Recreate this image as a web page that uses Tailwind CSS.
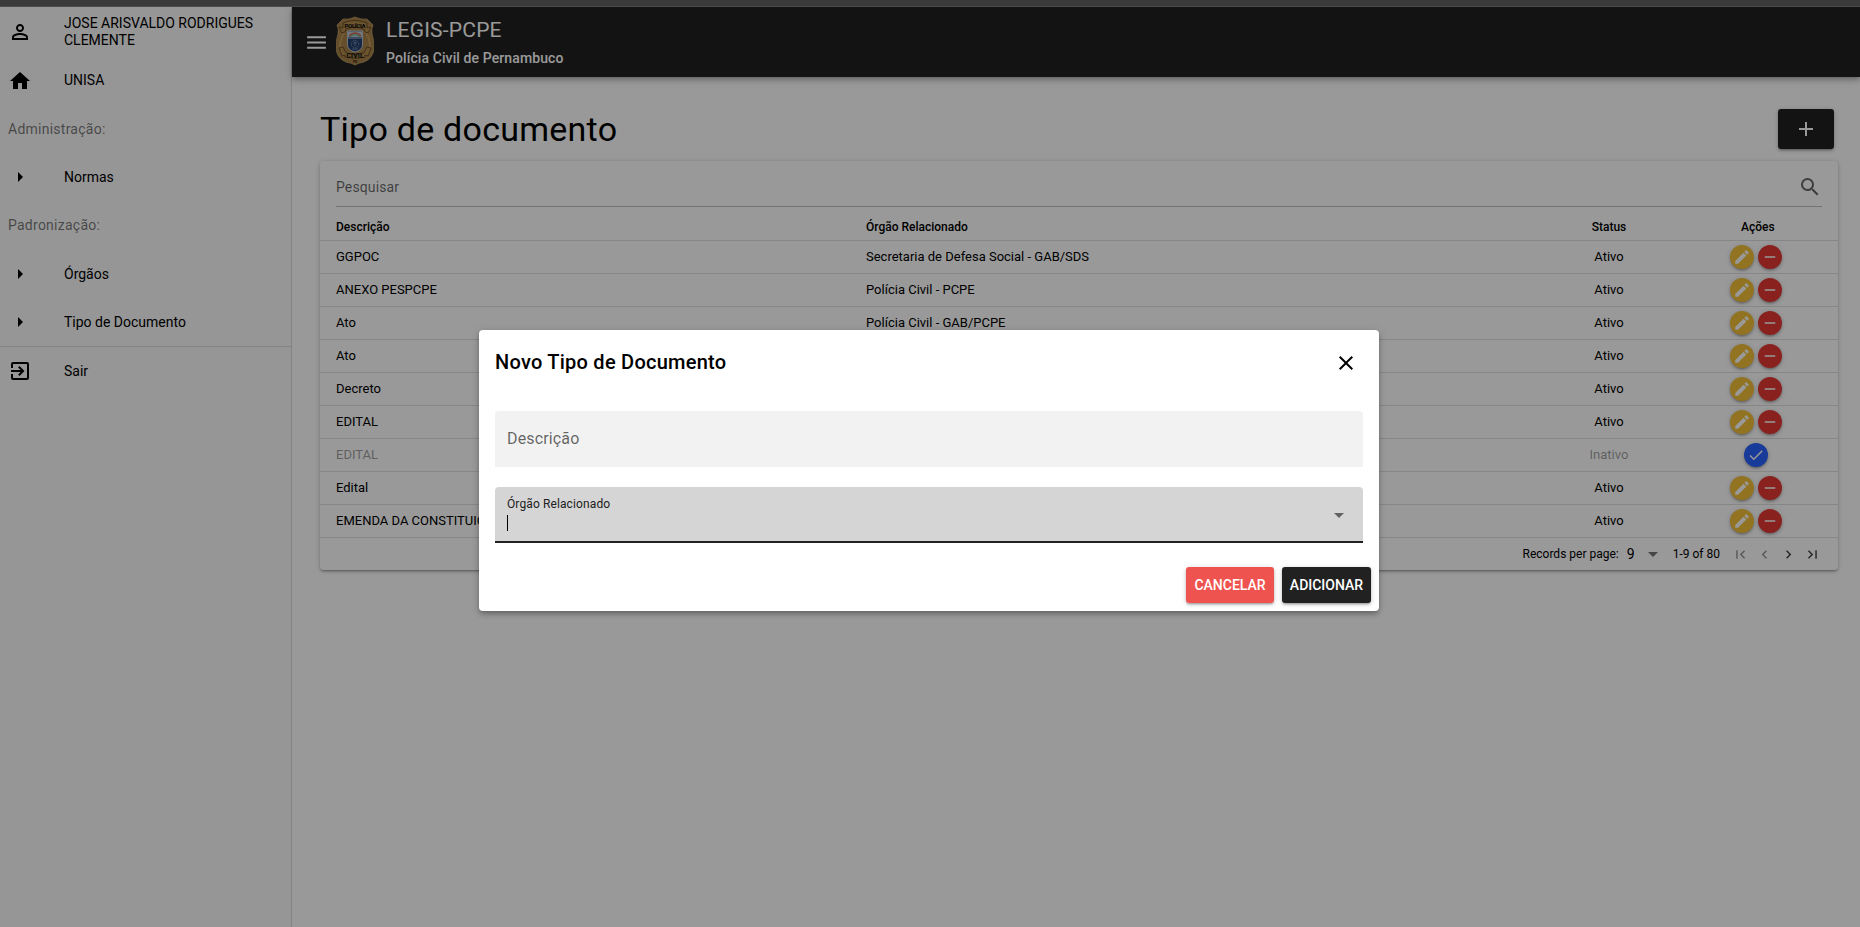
<!DOCTYPE html>
<html lang="pt-BR">
<head>
<meta charset="utf-8">
<title>LEGIS-PCPE</title>
<script src="https://cdn.jsdelivr.net/npm/@tailwindcss/browser@4"></script>
</head>
<body class="relative h-[927px] w-[1860px] overflow-hidden bg-white font-['Roboto',sans-serif] text-sm text-black">
<svg class="hidden">
  <symbol id="edit" viewBox="0 0 24 24"><path d="M3 17.25V21h3.75L17.81 9.94l-3.75-3.75L3 17.25zM20.71 7.04a1 1 0 0 0 0-1.41l-2.34-2.34a1 1 0 0 0-1.41 0l-1.83 1.83 3.75 3.75 1.83-1.83z"/></symbol>
  <symbol id="minus" viewBox="0 0 24 24"><path d="M19 13H5v-2h14v2z"/></symbol>
  <symbol id="check" viewBox="0 0 24 24"><path d="M9 16.17 4.83 12l-1.42 1.41L9 19 21 7l-1.41-1.41z"/></symbol>
  <symbol id="right" viewBox="0 0 24 24"><path d="M10 17l5-5-5-5v10z"/></symbol>
  <symbol id="down" viewBox="0 0 24 24"><path d="M7 10l5 5 5-5z"/></symbol>
</svg>

<div class="flex h-full flex-col">
  <div class="h-[7px] shrink-0"></div>
  <div class="flex min-h-0 flex-1">
    <aside class="w-[292px] shrink-0 border-r border-black/12 bg-[#fafafa]">
      <div class="flex h-[49px] items-center px-2">
        <svg class="mt-px mr-8 size-6 shrink-0" viewBox="0 0 24 24"><path d="M12 5.9a2.1 2.1 0 1 1 0 4.2 2.1 2.1 0 0 1 0-4.2m0 9c2.97 0 6.1 1.46 6.1 2.1v1.1H5.9V17c0-.64 3.13-2.1 6.1-2.1M12 4C9.79 4 8 5.79 8 8s1.79 4 4 4 4-1.79 4-4-1.79-4-4-4zm0 9c-2.67 0-8 1.34-8 4v3h16v-3c0-2.66-5.33-4-8-4z"/></svg>
        <span class="leading-[16.8px]">JOSE ARISVALDO RODRIGUES CLEMENTE</span>
      </div>
      <div class="flex h-12 items-center px-2">
        <svg class="mt-px mr-8 size-6 shrink-0" viewBox="0 0 24 24"><path d="M10 20v-6h4v6h5v-8h3L12 3 2 12h3v8z"/></svg>UNISA
      </div>
      <div class="flex h-[49px] items-center px-2 tracking-[.01786em] text-black/54">Administração:</div>
      <div class="flex h-12 items-center px-2"><svg class="mr-8 size-6"><use href="#right"/></svg>Normas</div>
      <div class="flex h-[49px] items-center px-2 pb-px tracking-[.01786em] text-black/54">Padronização:</div>
      <div class="flex h-12 items-center px-2"><svg class="mr-8 size-6"><use href="#right"/></svg>Órgãos</div>
      <div class="flex h-[49px] items-center border-b border-black/12 px-2"><svg class="mr-8 size-6"><use href="#right"/></svg>Tipo de Documento</div>
      <div class="flex h-12 items-center px-2">
        <svg class="mr-8 size-6" viewBox="0 0 24 24"><path d="M10.09 15.59 11.5 17l5-5-5-5-1.41 1.41L12.67 11H3v2h9.67l-2.58 2.59zM19 3H5a2 2 0 0 0-2 2v4h2V5h14v14H5v-4H3v4a2 2 0 0 0 2 2h14a2 2 0 0 0 2-2V5a2 2 0 0 0-2-2z"/></svg>Sair
      </div>
    </aside>

    <div class="flex min-w-0 flex-1 flex-col">
      <header class="flex h-[70px] shrink-0 items-center bg-[#212121] pl-3 text-white shadow-[0_2px_4px_-1px_rgba(0,0,0,.2),0_4px_5px_rgba(0,0,0,.14),0_1px_10px_rgba(0,0,0,.12)]">
        <svg class="size-[25px]" viewBox="0 0 24 24" fill="currentColor"><path d="M3 18h18v-2H3v2zm0-5h18v-2H3v2zm0-7v2h18V6H3z"/></svg>
        <svg class="-mt-0.5 ml-[7px] h-[50px] w-[38px]" viewBox="0 0 38 50">
          <path d="M7 3Q13 4 19 1q6 3 12 2l6 6q-2 4-1 9 2 6 2 13 0 11-10 15-6 1-9 3-3-2-9-3Q0 42 0 31q0-7 2-13 1-5-1-9z" fill="#a78248" stroke="#c9a767" stroke-width=".7"/>
          <path d="M9 15q-5 8-5 16M29 15q5 8 5 16" fill="none" stroke="#c09a5a" stroke-width="2"/>
          <path d="M3 11l4 1V7q12-5 24 0v5l4-1-3 6-3-1-1-3q-9-4-18 0l-1 3-3 1zM3 32l4-1 3 6q9 3 18 0l3-6 4 1-3 8-3-1v2q-10 3-20 0v-2l-3 1z" fill="#b48d4e" stroke="#4d3819" stroke-width=".7"/>
          <path d="M11.500 15h15v14q0 5-7.500 7-7.500-2-7.500-7z" fill="#23406f" stroke="#c5ccd6" stroke-width=".9"/>
          <path d="M12 15.500h14V21H12z" fill="#b9c8d4"/>
          <path d="M13 20q6-6 12 0" fill="none" stroke="#d06050" stroke-width="1.300"/>
          <path d="M14 20.500q5-3.500 10 0" fill="none" stroke="#62b588" stroke-width="1.200"/>
          <path d="M12 22h14" stroke="#dce2ea" stroke-width=".8"/>
          <circle cx="19" cy="28" r="3.800" fill="none" stroke="#8296b5" stroke-width=".8" stroke-dasharray="1.500 .7"/>
          <path d="M17 27h4m-2-2v5m-3 3h6" stroke="#8296b5" stroke-width=".8"/>
          <text x="19" y="11.500" text-anchor="middle" font-size="6" font-weight="900" textLength="21" fill="#111">POLÍCIA</text>
          <text x="19" y="41.500" text-anchor="middle" font-size="6.500" font-weight="900" textLength="17" fill="#111">CIVIL</text>
          <text x="19" y="46.500" text-anchor="middle" font-size="3.500" font-weight="700" fill="#302010">PE</text>
        </svg>
        <div class="ml-3 flex flex-col">
          <div class="text-[21px] leading-8 tracking-[.01em]">LEGIS-PCPE</div>
          <div class="leading-6 font-medium tracking-[.00714em]">Polícia Civil de Pernambuco</div>
        </div>
      </header>

      <main class="flex flex-1 flex-col pt-8 pr-[22px] pl-7">
        <div class="flex h-10 items-center justify-between pr-1">
          <h1 class="text-[34px] leading-10 tracking-[.00735em]">Tipo de documento</h1>
          <button class="flex h-10 w-14 items-center justify-center rounded-[3px] bg-[#212121] text-white shadow-[0_1px_5px_rgba(0,0,0,.2),0_2px_2px_rgba(0,0,0,.14),0_3px_1px_-2px_rgba(0,0,0,.12)]">
            <svg class="size-6" viewBox="0 0 24 24" fill="currentColor"><path d="M19 13h-6v6h-2v-6H5v-2h6V5h2v6h6v2z"/></svg>
          </button>
        </div>
        <section class="mt-3 h-[409px] rounded bg-white shadow-[0_1px_5px_rgba(0,0,0,.2),0_2px_2px_rgba(0,0,0,.14),0_3px_1px_-2px_rgba(0,0,0,.12)]">
          <div class="mx-4 flex h-[46px] items-center justify-between border-b border-black/24 pt-[7px] text-black/60">
            <span class="tracking-[.00937em]">Pesquisar</span>
            <svg class="size-6" viewBox="0 0 24 24" fill="currentColor"><path d="M15.500 14h-.79l-.28-.27A6.470 6.470 0 0 0 16 9.500 6.500 6.500 0 1 0 9.500 16c1.610 0 3.090-.59 4.230-1.570l.27.28v.79l5 4.990L20.490 19l-4.990-5zm-6 0a4.500 4.500 0 1 1 0-9 4.500 4.500 0 0 1 0 9z"/></svg>
          </div>
          <div class="grid h-[34px] grid-cols-[546px_665px_156px_1fr] items-center border-b border-black/12 pt-[7px] text-xs font-medium">
            <span class="pl-4">Descrição</span><span>Órgão Relacionado</span><span class="text-center">Status</span><span class="pl-[54px]">Ações</span>
          </div>
          <div id="rows"></div>
          <div class="flex h-[32px] items-center justify-end pr-[17px] text-xs">
            <span>Records per page:</span>
            <span class="ml-2 w-[14px] text-sm">9</span>
            <svg class="size-6 text-black/54" fill="currentColor"><use href="#down"/></svg>
            <span class="mr-[12px] ml-2">1-9 of 80</span>
            <div class="flex gap-[7px] text-black/60">
              <svg class="size-[17px] opacity-70" viewBox="0 0 24 24" fill="currentColor"><path d="M18.410 16.590 13.820 12l4.590-4.590L17 6l-6 6 6 6zM6 6h2v12H6z"/></svg>
              <svg class="size-[17px] opacity-70" viewBox="0 0 24 24" fill="currentColor"><path d="M15.410 7.410 14 6l-6 6 6 6 1.410-1.410L10.830 12z"/></svg>
              <svg class="size-[17px] text-black/75" viewBox="0 0 24 24" fill="currentColor"><path d="M10 6 8.590 7.410 13.170 12l-4.580 4.590L10 18l6-6z"/></svg>
              <svg class="size-[17px] text-black/75" viewBox="0 0 24 24" fill="currentColor"><path d="M5.590 7.410 10.180 12l-4.590 4.590L7 18l6-6-6-6zM16 6h2v12h-2z"/></svg>
            </div>
          </div>
        </section>
      </main>
    </div>
  </div>
</div>

<div class="absolute inset-0 bg-black/40"></div>
<div class="absolute inset-x-0 top-0 h-[7px] border-b border-[#4b4b4b] bg-[#3a3a3a]"></div>

<div class="absolute top-[330px] left-[479px] flex h-[281px] w-[900px] flex-col rounded bg-white shadow-[0_2px_4px_-1px_rgba(0,0,0,.2),0_4px_5px_rgba(0,0,0,.14),0_1px_10px_rgba(0,0,0,.12)]">
  <div class="flex h-[64px] items-center justify-between pr-[21px] pl-4">
    <h2 class="text-xl leading-8 font-medium tracking-[.0125em]">Novo Tipo de Documento</h2>
    <svg class="mt-0.5 size-6" viewBox="0 0 24 24"><path d="M19 6.410 17.590 5 12 10.590 6.410 5 5 6.410 10.590 12 5 17.590 6.410 19 12 13.410 17.590 19 19 17.590 13.410 12z"/></svg>
  </div>
  <div class="mx-4 mt-[17px] flex h-14 items-center rounded-t bg-[#f2f2f2] px-3 text-base tracking-[.00937em] text-black/60">Descrição</div>
  <div class="mx-4 mt-5 flex h-14 items-center justify-between rounded-t border-b-2 border-[#212121] bg-[#d5d5d5] pr-3 pl-3">
    <div class="-mt-[3px] flex flex-col">
      <span class="text-xs leading-5 tracking-[.00937em] text-[#212121]">Órgão Relacionado</span>
      <span class="mt-px h-4 w-px bg-black"></span>
    </div>
    <svg class="mt-0.5 size-6 text-black/54" fill="currentColor"><use href="#down"/></svg>
  </div>
  <div class="mt-6 flex justify-end gap-2 pr-2 font-medium text-white">
    <button class="h-9 w-[88px] rounded-[3px] bg-[#ef5350] shadow-[0_1px_5px_rgba(0,0,0,.2),0_2px_2px_rgba(0,0,0,.14),0_3px_1px_-2px_rgba(0,0,0,.12)]">CANCELAR</button>
    <button class="h-9 w-[89px] rounded-[3px] bg-[#212121] shadow-[0_1px_5px_rgba(0,0,0,.2),0_2px_2px_rgba(0,0,0,.14),0_3px_1px_-2px_rgba(0,0,0,.12)]">ADICIONAR</button>
  </div>
</div>

<script>
const rows = [
  ['GGPOC', 'Secretaria de Defesa Social - GAB/SDS', 1],
  ['ANEXO PESPCPE', 'Polícia Civil - PCPE', 1],
  ['Ato', 'Polícia Civil - GAB/PCPE', 1],
  ['Ato', '', 1],
  ['Decreto', '', 1],
  ['EDITAL', '', 1],
  ['EDITAL', '', 0],
  ['Edital', '', 1],
  ['EMENDA DA CONSTITUIÇÃO', '', 1],
];
const shadow = 'shadow-[0_1px_5px_rgba(0,0,0,.2),0_2px_2px_rgba(0,0,0,.14),0_3px_1px_-2px_rgba(0,0,0,.12)]';
const round = (bg, icon) => `<span class="flex size-6 items-center justify-center rounded-full text-white ${bg} ${shadow}"><svg class="mb-px size-[18px]" fill="currentColor"><use href="#${icon}"/></svg></span>`;
document.getElementById('rows').innerHTML = rows.map(([name, org, on]) => `
  <div class="grid h-[33px] grid-cols-[546px_665px_156px_1fr] items-center border-b border-black/12 text-[13px] ${on ? '' : 'text-black/40'}">
    <span class="pl-4">${name}</span><span>${org}</span><span class="text-center">${on ? 'Ativo' : 'Inativo'}</span>
    <span class="flex w-[138px] justify-center gap-1">${on ? round('bg-[#f2c037]', 'edit') + round('bg-[#e53935]', 'minus') : round('bg-[#2962ff]', 'check')}</span>
  </div>`).join('');
</script>
</body>
</html>
